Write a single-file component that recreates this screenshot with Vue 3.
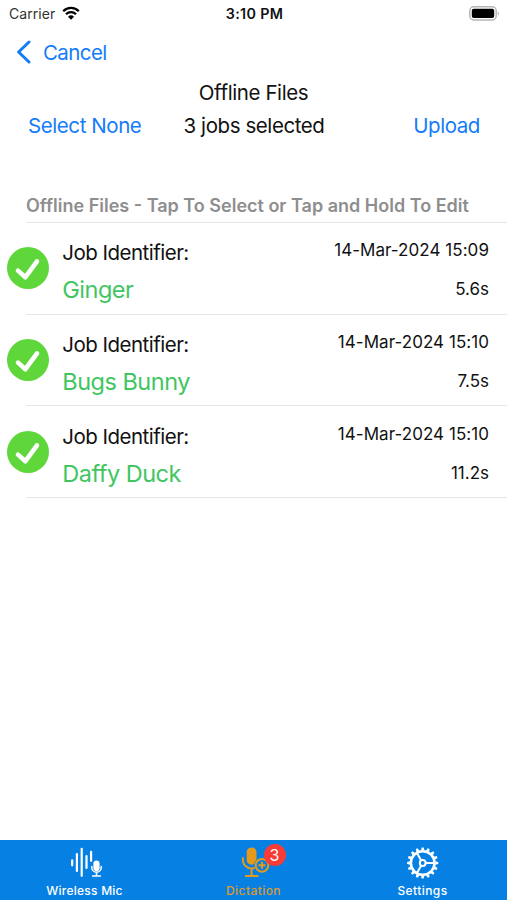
<template>
  <div class="screen">
    <div class="status-bar">
      <div class="status-left">
        <span class="carrier">Carrier</span>
        <svg class="wifi" width="18" height="14" viewBox="0 0 18 14">
          <path d="M1.2 5.2a11 11 0 0 1 15.6 0" />
          <path d="M4 8.2a7.1 7.1 0 0 1 10 0" />
          <path class="dot" d="M9 13.8 6 10.7a4.3 4.3 0 0 1 6 0Z" />
        </svg>
      </div>
      <span class="clock">3:10 PM</span>
      <div class="status-right">
        <svg width="31" height="15" viewBox="0 0 31 15">
          <rect x="0.8" y="0.8" width="26.4" height="13.2" rx="4" fill="#fff" stroke="#b5b5b5" stroke-width="1.5" />
          <rect x="2.8" y="2.8" width="22.4" height="9.2" rx="2" fill="#000" />
          <path d="M28.8 5.2a2.6 2.6 0 0 1 0 4.4Z" fill="#b5b5b5" />
        </svg>
      </div>
    </div>

    <div class="nav">
      <svg class="chevron" width="15" height="24" viewBox="0 0 15 24">
        <path d="M13 2 2.6 12 13 22" />
      </svg>
      <span class="cancel">Cancel</span>
    </div>

    <div class="title">Offline Files</div>
    <div class="actions">
      <span class="link none">Select None</span>
      <span class="count">{{ jobs.length }} jobs selected</span>
      <span class="link upload">Upload</span>
    </div>

    <div class="section-header">Offline Files - Tap To Select or Tap and Hold To Edit</div>

    <div class="list">
      <div v-for="job in jobs" :key="job.name" class="row">
        <svg class="check" width="42" height="42" viewBox="0 0 42 42">
          <circle cx="21" cy="21" r="21" fill="#5fd63a" />
          <path d="M11 23.6 18.4 30.2 30 14.4" />
        </svg>
        <div class="job">
          <span class="label">Job Identifier:</span>
          <span class="name">{{ job.name }}</span>
        </div>
        <div class="meta">
          <span class="date">{{ job.date }}</span>
          <span class="length">{{ job.length }}</span>
        </div>
      </div>
    </div>

    <div class="tabs">
      <div class="tab">
        <svg width="36" height="34" viewBox="0 0 36 34">
          <g fill="none" stroke="#fff" stroke-linecap="round">
            <path stroke-width="2.2" d="M5.2 15.3v5M9.9 9v17M14.7 3.8v27M19.5 11v12M24.1 6.8v9" />
            <path stroke-width="1.5" d="M24.8 21.5v1a4.7 4.7 0 0 0 9.4 0v-1M29.5 27v3.3M25.6 31h7.8" />
          </g>
          <rect x="26.4" y="15.4" width="6.2" height="10.6" rx="3.1" fill="#fff" />
        </svg>
        <span class="tab-label mic">Wireless Mic</span>
      </div>
      <div class="tab active">
        <div class="icon-wrap">
          <svg width="36" height="34" viewBox="0 0 36 34">
            <rect x="10.7" y="2.4" width="9.8" height="17.4" rx="4.9" fill="#e59a1c" />
            <g fill="none" stroke="#e59a1c" stroke-width="2" stroke-linecap="round">
              <path d="M6.9 13v2a8.7 8.7 0 0 0 12.4 7.7M15.6 24v6.5M9.7 31h12" />
            </g>
            <circle cx="26" cy="20.3" r="7.9" fill="#0780e4" />
            <circle cx="26" cy="20.3" r="6.4" fill="none" stroke="#e59a1c" stroke-width="2" />
            <path d="M26 16.8v7M22.5 20.3h7" stroke="#e59a1c" stroke-width="2.1" />
          </svg>
          <span class="badge">3</span>
        </div>
        <span class="tab-label dictation">Dictation</span>
      </div>
      <div class="tab">
        <svg width="36" height="34" viewBox="0 0 36 34">
          <g transform="translate(17.7 18)" fill="none" stroke="#fff">
            <circle r="11.8" stroke-width="2.5" />
            <path v-for="n in 16" :key="n" :transform="`rotate(${n * 22.5})`" d="M-1.7-12.5-1-15.6H1L1.7-12.5Z" fill="#fff" stroke="none" />
            <circle r="2.9" stroke-width="2" />
            <path d="M3 0H12M-1.5-2.6-6-10.4M-1.5 2.6-6 10.4" stroke-width="2" />
          </g>
        </svg>
        <span class="tab-label settings">Settings</span>
      </div>
    </div>
  </div>
</template>

<script setup>
const jobs = [
  { name: 'Ginger', date: '14-Mar-2024 15:09', length: '5.6s' },
  { name: 'Bugs Bunny', date: '14-Mar-2024 15:10', length: '7.5s' },
  { name: 'Daffy Duck', date: '14-Mar-2024 15:10', length: '11.2s' }
]
</script>

<style scoped>
.screen {
  display: flex;
  flex-direction: column;
  width: 507px;
  height: 900px;
  overflow: hidden;
  background: #fff;
  color: #111;
  font-family: Inter, 'Liberation Sans', sans-serif;
  white-space: nowrap;
}

.status-bar {
  display: grid;
  grid-template-columns: 1fr auto 1fr;
  align-items: center;
  height: 27px;
  padding: 0 7px 0 9px;
}

.status-left {
  display: flex;
  align-items: center;
  gap: 7px;
}

.carrier {
  font-size: 14px;
  letter-spacing: 0.05px;
  color: #333;
}

.wifi {
  margin-top: -2px;
  fill: none;
  stroke: #000;
  stroke-width: 2.3;
}

.wifi .dot {
  fill: #000;
  stroke: none;
}

.clock {
  font-size: 14.3px;
  font-weight: 600;
  letter-spacing: 0.35px;
}

.status-right {
  display: flex;
  justify-content: flex-end;
}

.nav {
  display: flex;
  align-items: center;
  gap: 12px;
  height: 50px;
  padding-left: 16px;
  color: #147cf8;
}

.chevron {
  fill: none;
  stroke: #147cf8;
  stroke-width: 3;
  stroke-linecap: round;
  stroke-linejoin: round;
}

.cancel {
  padding-top: 1px;
  font-size: 20.5px;
  letter-spacing: -0.6px;
}

.title {
  height: 32px;
  line-height: 32px;
  text-align: center;
  font-size: 20.5px;
  letter-spacing: -0.4px;
}

.actions {
  display: grid;
  grid-template-columns: 1fr auto 1fr;
  height: 32px;
  padding: 0 27px 0 28px;
  line-height: 33px;
  font-size: 20.5px;
  letter-spacing: -0.42px;
}

.link {
  color: #147cf8;
}

.upload {
  text-align: right;
}

.section-header {
  height: 34px;
  margin-top: 47px;
  padding-left: 26px;
  line-height: 35px;
  font-size: 18px;
  font-weight: 600;
  color: #8e8e8e;
}

.list {
  flex: 1;
  margin-left: 26px;
  border-top: 1px solid #e6e6e6;
}

.row {
  display: flex;
  align-items: center;
  box-sizing: border-box;
  height: 91.7px;
  padding-right: 18px;
  border-bottom: 1px solid #e6e6e6;
}

.check {
  flex: none;
  margin-left: -19px;
  margin-right: 13.3px;
}

.check path {
  fill: none;
  stroke: #fff;
  stroke-width: 4.6;
  stroke-linecap: round;
  stroke-linejoin: round;
}

.job,
.meta {
  display: flex;
  flex-direction: column;
  padding-top: 5px;
}

.job {
  flex: 1;
}

.label {
  padding-top: 1px;
  line-height: 38px;
  font-size: 20.5px;
  letter-spacing: -0.52px;
}

.name {
  line-height: 36px;
  font-size: 23.5px;
  letter-spacing: -0.5px;
  color: #3fc661;
}

.meta {
  align-items: flex-end;
  font-size: 17px;
}

.date {
  line-height: 38px;
  letter-spacing: 0.05px;
}

.length {
  line-height: 41px;
}

.tabs {
  display: flex;
  box-sizing: border-box;
  height: 60px;
  padding-top: 5px;
  background: #0780e4;
}

.tab {
  display: flex;
  flex: 1;
  flex-direction: column;
  align-items: center;
  color: #fff;
}

.tab.active {
  color: #d99a30;
}

.tab-label {
  line-height: 15px;
  margin-top: 4px;
  font-size: 12px;
  font-weight: 500;
}

.mic {
  letter-spacing: 0.24px;
}

.dictation,
.settings {
  letter-spacing: 0.42px;
}

.icon-wrap {
  position: relative;
  height: 34px;
}

.badge {
  position: absolute;
  left: 28px;
  top: -1px;
  width: 22px;
  height: 22px;
  border-radius: 50%;
  background: #f83b34;
  color: #fff;
  font-size: 16px;
  line-height: 22px;
  text-align: center;
}
</style>

<style>
body {
  margin: 0;
  background: #fff;
}
</style>
